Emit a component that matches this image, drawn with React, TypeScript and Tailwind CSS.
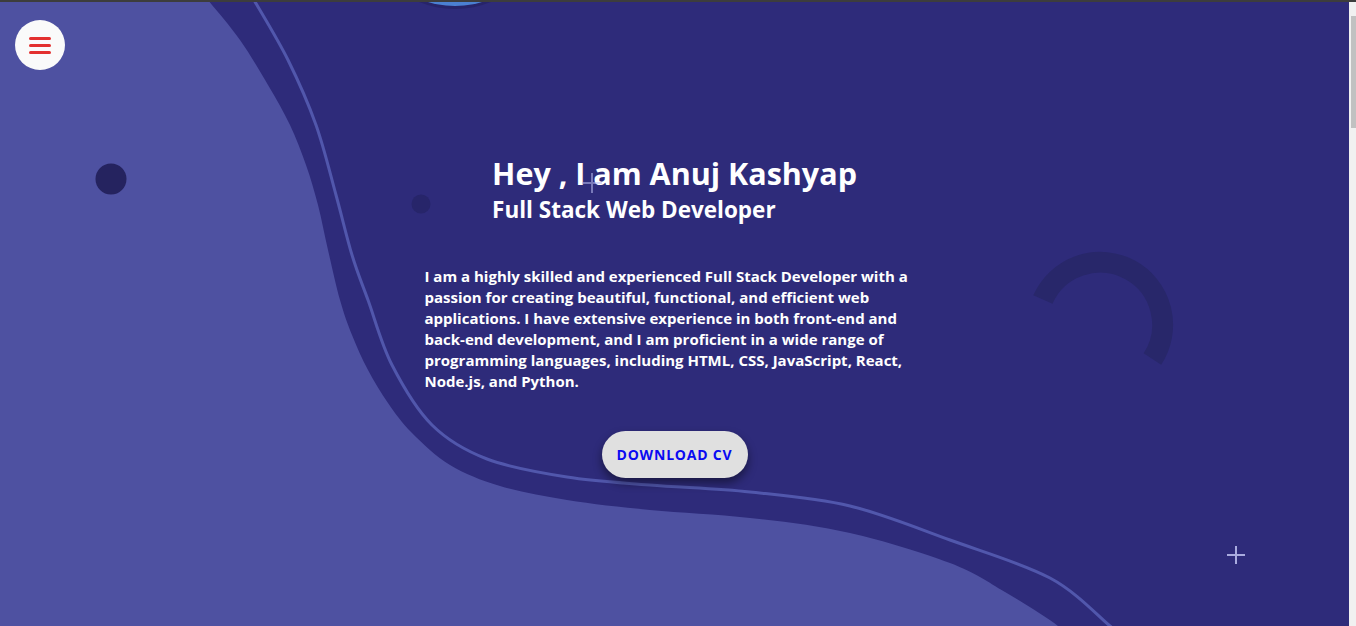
import React from "react";

type Pt = [number, number];

// catmull-rom -> cubic bezier, keeps the curve going through every point
const smooth = (pts: Pt[]) => {
  let d = `M${pts[0][0]},${pts[0][1]}`;
  for (let i = 0; i < pts.length - 1; i++) {
    const p0 = pts[i - 1] || pts[i];
    const p1 = pts[i];
    const p2 = pts[i + 1];
    const p3 = pts[i + 2] || p2;
    const c1x = p1[0] + (p2[0] - p0[0]) / 6;
    const c1y = p1[1] + (p2[1] - p0[1]) / 6;
    const c2x = p2[0] - (p3[0] - p1[0]) / 6;
    const c2y = p2[1] - (p3[1] - p1[1]) / 6;
    d += ` C${c1x.toFixed(1)},${c1y.toFixed(1)} ${c2x.toFixed(1)},${c2y.toFixed(1)} ${p2[0]},${p2[1]}`;
  }
  return d;
};

const edge: Pt[] = [
  [208, 0], [240, 40], [268, 85], [290, 125], [306, 165], [318, 205],
  [328, 250], [340, 300], [352, 335], [368, 370], [388, 403], [412, 433],
  [450, 465], [500, 486], [567, 500], [650, 510], [750, 518], [850, 533],
  [950, 563], [1005, 592], [1058, 626], [1066, 640],
];

const line: Pt[] = [
  [254, 0], [288, 60], [316, 125], [336, 195], [352, 255], [368, 300],
  [392, 365], [432, 425], [487, 459], [567, 477], [650, 485], [750, 492],
  [850, 506], [950, 540], [1050, 578], [1110, 626], [1125, 640],
];

const Backdrop = () => (
  <svg
    className="absolute inset-0 w-full h-full"
    viewBox="0 2 1349 624"
    preserveAspectRatio="none"
  >
    <path d={`${smooth(edge)} L0,640 L0,0 Z`} fill="#4e51a1" />
    <path d={smooth(line)} fill="none" stroke="#5157ac" strokeWidth="3" />
    <circle cx="455" cy="-86" r="95" fill="#1f1d5a" opacity="0.5" />
    <circle cx="455" cy="-87" r="93" fill="#4b80d2" />
    <circle cx="111" cy="179" r="15.5" fill="#25235f" />
    <circle cx="421" cy="204" r="9.5" fill="#27256a" />
    <path
      d="M1042.9,299.6 A62.5,62.5 0 1 1 1152.4,359"
      fill="none"
      stroke="#28276a"
      strokeWidth="21"
    />
  </svg>
);

const Sparkles = () => (
  <svg
    className="absolute inset-0 w-full h-full pointer-events-none"
    viewBox="0 2 1349 624"
    preserveAspectRatio="none"
  >
    <g stroke="#b9bbf0" strokeWidth="2" opacity="0.55">
      <path d="M592,173 V193 M582,183 H602" />
    </g>
    <g stroke="#a9abdf" strokeWidth="2">
      <path d="M1236,546 V564 M1227,555 H1245" />
    </g>
  </svg>
);

const MenuButton = () => (
  <button className="absolute left-[15px] top-[18px] w-[50px] h-[50px] rounded-full bg-[#fafafa] flex flex-col items-center justify-center gap-[4px]">
    <span className="block w-[22px] h-[3px] rounded-sm bg-[#e3302f]" />
    <span className="block w-[22px] h-[3px] rounded-sm bg-[#e3302f]" />
    <span className="block w-[22px] h-[3px] rounded-sm bg-[#e3302f]" />
  </button>
);

export default function App() {
  return (
    <div className="w-[1356px] h-[626px] flex flex-col overflow-hidden [font-family:'Open_Sans',sans-serif]">
      <div className="h-[2px] bg-[#3d3d3d]" />
      <div className="flex flex-1">
        <main className="relative flex-1 h-[624px] overflow-hidden bg-[#2e2b7a] text-white">
          <Backdrop />
          <div className="relative flex flex-col items-center pt-[153px]">
            <div className="w-fit">
              <h1 className="text-[30.5px] leading-[36px] font-bold">
                Hey , I am Anuj Kashyap
              </h1>
              <h2 className="text-[22.5px] leading-[28px] font-bold mt-[5px]">
                Full Stack Web Developer
              </h2>
            </div>
            <p className="w-[500px] mt-[42px] text-[15px] leading-[21px] font-bold">
              I am a highly skilled and experienced Full Stack Developer with a
              passion for creating beautiful, functional, and efficient web
              applications. I have extensive experience in both front-end and
              back-end development, and I am proficient in a wide range of
              programming languages, including HTML, CSS, JavaScript, React,
              Node.js, and Python.
            </p>
            <button className="mt-[39px] w-[146px] h-[47px] rounded-full bg-[#e0e0e0] text-[#0a0af2] text-[14px] font-bold tracking-[0.8px] shadow-[0_5px_10px_rgba(0,0,0,0.45)]">
              DOWNLOAD CV
            </button>
          </div>
          <Sparkles />
          <MenuButton />
        </main>
        <div className="w-[7px] bg-[#f1f1f1]">
          <div className="mt-[14px] ml-[2px] w-[5px] h-[112px] bg-[#c1c1c1]" />
        </div>
      </div>
    </div>
  );
}
